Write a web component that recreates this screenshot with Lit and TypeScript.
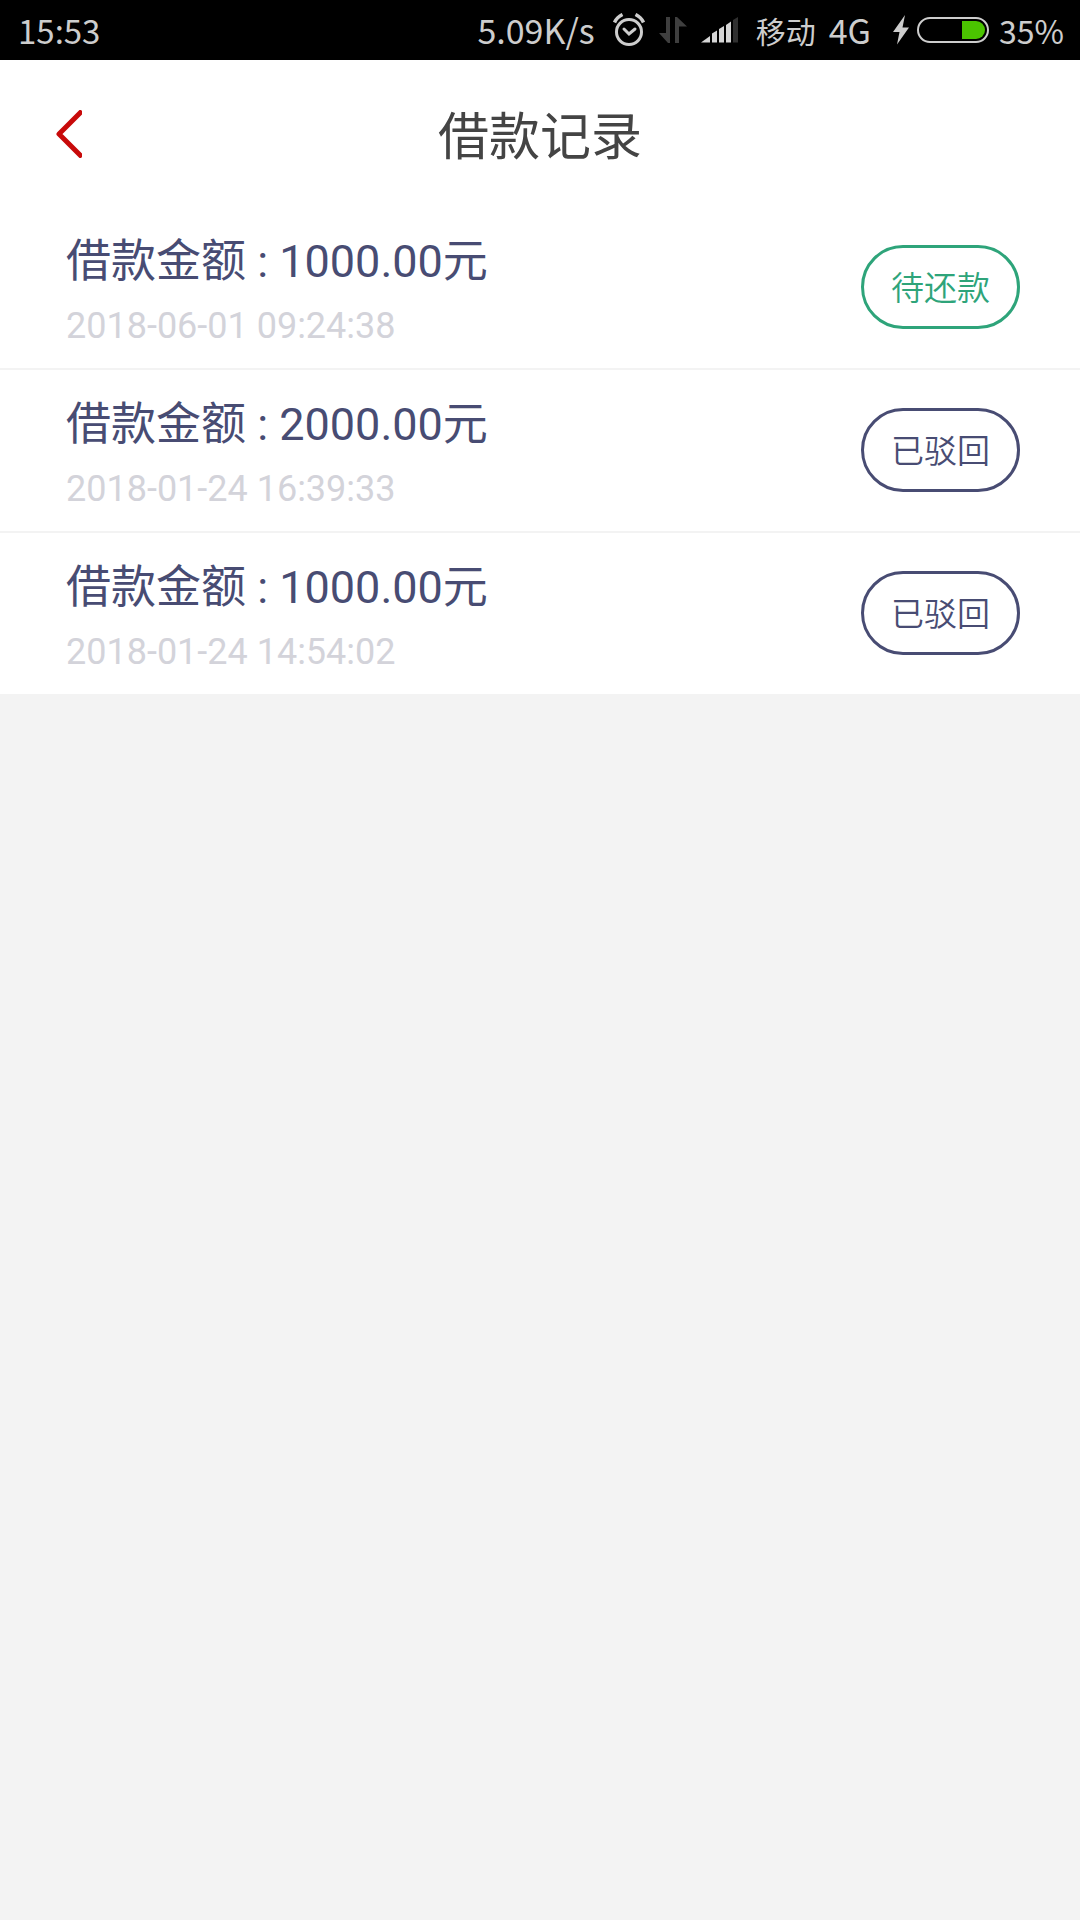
import { LitElement, html, css } from "lit";
import { customElement, property } from "lit/decorators.js";
import { classMap } from "lit/directives/class-map.js";

type LoanStatus = "pending" | "rejected";

interface Loan {
  amount: string;
  time: string;
  status: LoanStatus;
}

const STATUS_LABEL: Record<LoanStatus, string> = {
  pending: "待还款",
  rejected: "已驳回",
};

const LOANS: Loan[] = [
  { amount: "1000.00", time: "2018-06-01 09:24:38", status: "pending" },
  { amount: "2000.00", time: "2018-01-24 16:39:33", status: "rejected" },
  { amount: "1000.00", time: "2018-01-24 14:54:02", status: "rejected" },
];

@customElement("status-bar")
export class StatusBar extends LitElement {
  static styles = css`
    :host {
      display: flex;
      align-items: center;
      height: 60px;
      padding: 0 16px 0 18px;
      background: #000;
      color: #cdcdcd;
      font-family: "Noto Sans CJK SC", sans-serif;
      font-size: 33px;
      line-height: 60px;
      white-space: nowrap;
    }
    .spacer {
      flex: 1;
    }
    .network {
      font-size: 34px;
    }
    .carrier {
      font-size: 30px;
      margin: 0 13px 0 18px;
    }
    .alarm {
      margin: 0 14px 0 18px;
    }
    .signal {
      margin-left: 14px;
    }
    .bolt {
      margin: 0 8px 0 22px;
    }
    .level {
      font-size: 32px;
      margin-left: 10px;
    }
    svg {
      display: block;
      flex: none;
    }
  `;

  render() {
    return html`
      <span>15:53</span>
      <span class="spacer"></span>
      <span class="network">5.09K/s</span>
      <svg class="alarm" width="32" height="34" viewBox="0 0 32 34" fill="none" stroke="#cdcdcd" aria-hidden="true">
        <circle cx="16" cy="19" r="12.5" stroke-width="3" />
        <path d="M11 16l5 5 6-5" stroke-width="3" stroke-linecap="round" />
        <path d="M1.500 9.500C3 6 5.500 3.500 9.500 1.500M30.500 9.500C29 6 26.500 3.500 22.500 1.500" stroke-width="3.500" />
      </svg>
      <svg width="28" height="26" viewBox="0 0 28 26" fill="#3f3f3f" aria-hidden="true">
        <path d="M7 0h4v26H9L0 16h7z" />
        <path d="M20 26h-4V0h2l10 9.500h-8z" />
      </svg>
      <svg class="signal" width="37" height="26" viewBox="0 0 37 26" fill="#d6d6d6" aria-hidden="true">
        <path d="M0 25.500L9 19v6.500z" />
        <path d="M11 16.500l5-3v12h-5z" />
        <path d="M18 12l5-3v16.500h-5z" />
        <path d="M25 8l5-3.500v21h-5z" />
        <path d="M32 3l5-3v25.500h-5z" fill="#303030" />
      </svg>
      <span class="carrier">移动</span>
      <span class="network">4G</span>
      <svg class="bolt" width="16" height="30" viewBox="0 0 16 30" fill="#cdcdcd" aria-hidden="true">
        <path d="M12 0L0 17h6.500L4 29.500 16 12.500H9.500z" />
      </svg>
      <svg width="72" height="26" viewBox="0 0 72 26" aria-hidden="true">
        <rect x="1" y="1" width="70" height="24" rx="12" fill="none" stroke="#cdcdcd" stroke-width="2" />
        <path d="M45 4h14a9 9 0 0 1 0 18H45z" fill="#4bc400" />
      </svg>
      <span class="level">35%</span>
    `;
  }
}

@customElement("loan-item")
export class LoanItem extends LitElement {
  @property({ attribute: false }) loan!: Loan;

  static styles = css`
    :host {
      box-sizing: border-box;
      display: flex;
      align-items: center;
      justify-content: space-between;
      padding: 0 60px 2px 66px;
      min-height: 161px;
      background: #fff;
    }
    .info {
      display: flex;
      flex-direction: column;
      padding-top: 14px;
      line-height: 64px;
    }
    .amount {
      color: #484c73;
      font-size: 45px;
    }
    .time {
      color: #d3d3da;
      font-size: 36px;
    }
    .badge {
      box-sizing: border-box;
      min-width: 159px;
      padding: 4px 24px 0;
      border: 3px solid;
      border-radius: 42px;
      font-size: 33px;
      font-weight: 350;
      line-height: 74px;
      text-align: center;
    }
    .pending {
      color: #2ea47a;
    }
    .rejected {
      color: #484c73;
    }
  `;

  render() {
    const { amount, time, status } = this.loan;
    return html`
      <div class="info">
        <span class="amount">借款金额 : ${amount}元</span>
        <time class="time">${time}</time>
      </div>
      <span class=${classMap({ badge: true, [status]: true })}>${STATUS_LABEL[status]}</span>
    `;
  }
}

@customElement("app-root")
export class AppRoot extends LitElement {
  static styles = css`
    :host {
      display: block;
      min-height: 100vh;
      background: #f3f3f3;
      font-family: Roboto, "Noto Sans CJK SC", sans-serif;
    }
    .header {
      display: grid;
      grid-template-columns: 120px 1fr 120px;
      align-items: center;
      height: 147px;
      background: #fff;
    }
    .back {
      display: flex;
      align-items: center;
      height: 100%;
      padding: 0 0 0 56px;
      border: 0;
      background: none;
      cursor: pointer;
    }
    .title {
      margin: 0;
      padding-top: 8px;
      color: #444;
      font-size: 51px;
      font-weight: 400;
      line-height: 72px;
      text-align: center;
    }
    .list {
      display: flex;
      flex-direction: column;
      gap: 2px;
      margin: 0;
      padding: 0;
      list-style: none;
    }
  `;

  render() {
    return html`
      <status-bar></status-bar>
      <header class="header">
        <button class="back" type="button" aria-label="返回">
          <svg width="26" height="48" viewBox="0 0 26 48" fill="none" stroke="#c80a0a" stroke-width="5" stroke-linejoin="round" aria-hidden="true">
            <path d="M26 1L3 24l23 23" />
          </svg>
        </button>
        <h1 class="title">借款记录</h1>
      </header>
      <main>
        <ul class="list">
          ${LOANS.map((loan) => html`<li><loan-item .loan=${loan}></loan-item></li>`)}
        </ul>
      </main>
    `;
  }
}
